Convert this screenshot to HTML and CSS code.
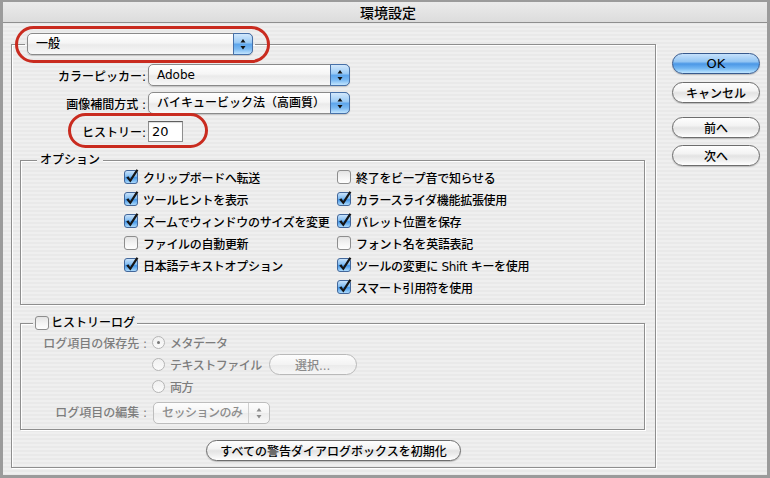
FILE: index.html
```html
<!DOCTYPE html>
<html lang="ja">
<head>
<meta charset="utf-8">
<title>環境設定</title>
<link rel="stylesheet" href="styles.css">
</head>
<body>
<svg class="defs" width="0" height="0" aria-hidden="true">
  <defs>
    <linearGradient id="gBlue" x1="0" y1="0" x2="0" y2="1">
      <stop offset="0" stop-color="#cfe6fc"/>
      <stop offset="0.45" stop-color="#82bdf2"/>
      <stop offset="0.55" stop-color="#4396e8"/>
      <stop offset="1" stop-color="#b5e0fe"/>
    </linearGradient>
    <linearGradient id="gWhite" x1="0" y1="0" x2="0" y2="1">
      <stop offset="0" stop-color="#e2e2e2"/>
      <stop offset="0.5" stop-color="#f3f3f3"/>
      <stop offset="1" stop-color="#ffffff"/>
    </linearGradient>
    <linearGradient id="gRadio" x1="0" y1="0" x2="0" y2="1">
      <stop offset="0" stop-color="#f0f0f0"/>
      <stop offset="1" stop-color="#fbfbfb"/>
    </linearGradient>
    <symbol id="cb-on" viewBox="0 0 14 14" overflow="visible">
      <rect x="0.5" y="0.5" width="13" height="13" rx="2.5" fill="url(#gBlue)" stroke="#43679a"/>
      <path d="M2.2 7.4 L4.4 6.3 L6.1 9.1 L12.4 -0.8 L14.4 0.3 L6.4 12.6 Z" fill="#151515"/>
    </symbol>
    <symbol id="cb-off" viewBox="0 0 14 14">
      <rect x="0.5" y="0.5" width="13" height="13" rx="2.5" fill="url(#gWhite)" stroke="#8d8d8d"/>
    </symbol>
    <symbol id="rd-on" viewBox="0 0 13 13">
      <circle cx="6.5" cy="6.5" r="6" fill="url(#gRadio)" stroke="#b4b4b4"/>
      <circle cx="6.5" cy="6.5" r="1.5" fill="#777"/>
    </symbol>
    <symbol id="rd-off" viewBox="0 0 13 13">
      <circle cx="6.5" cy="6.5" r="6" fill="url(#gRadio)" stroke="#b4b4b4"/>
    </symbol>
    <symbol id="arrows" viewBox="0 0 18 20">
      <path d="M6.5 8.5 H11.5 L9 5 Z M6.5 12 H11.5 L9 15.5 Z"/>
    </symbol>
  </defs>
</svg>

<div class="window">
  <div class="titlebar">環境設定</div>
  <div class="content stripe">
    <fieldset class="panel">
      <legend class="panel-legend">
        <span class="popup popup-main">
          <span class="popup-text">一般</span>
          <span class="stepper"><svg class="arrows" width="18" height="20"><use href="#arrows"/></svg></span>
          <span class="ring ring-popup"></span>
        </span>
      </legend>

      <div class="row row-first">
        <span class="row-label">カラーピッカー:</span>
        <span class="popup popup-wide">
          <span class="popup-text">Adobe</span>
          <span class="stepper"><svg class="arrows" width="18" height="20"><use href="#arrows"/></svg></span>
        </span>
      </div>
      <div class="row">
        <span class="row-label">画像補間方式 :</span>
        <span class="popup popup-wide">
          <span class="popup-text">バイキュービック法（高画質）</span>
          <span class="stepper"><svg class="arrows" width="18" height="20"><use href="#arrows"/></svg></span>
        </span>
      </div>
      <div class="row row-history">
        <span class="row-label">ヒストリー:</span>
        <span class="field">20<span class="ring ring-field"></span></span>
      </div>

      <fieldset class="group group-options">
        <legend class="group-legend stripe">オプション</legend>
        <div class="opt-cols">
          <div class="opt-col">
            <span class="check"><svg class="cb"><use href="#cb-on"/></svg>クリップボードへ転送</span>
            <span class="check"><svg class="cb"><use href="#cb-on"/></svg>ツールヒントを表示</span>
            <span class="check"><svg class="cb"><use href="#cb-on"/></svg>ズームでウィンドウのサイズを変更</span>
            <span class="check"><svg class="cb"><use href="#cb-off"/></svg>ファイルの自動更新</span>
            <span class="check"><svg class="cb"><use href="#cb-on"/></svg>日本語テキストオプション</span>
          </div>
          <div class="opt-col">
            <span class="check"><svg class="cb"><use href="#cb-off"/></svg>終了をビープ音で知らせる</span>
            <span class="check"><svg class="cb"><use href="#cb-on"/></svg>カラースライダ機能拡張使用</span>
            <span class="check"><svg class="cb"><use href="#cb-on"/></svg>パレット位置を保存</span>
            <span class="check"><svg class="cb"><use href="#cb-off"/></svg>フォント名を英語表記</span>
            <span class="check"><svg class="cb"><use href="#cb-on"/></svg>ツールの変更に Shift キーを使用</span>
            <span class="check"><svg class="cb"><use href="#cb-on"/></svg>スマート引用符を使用</span>
          </div>
        </div>
      </fieldset>

      <fieldset class="group group-log">
        <legend class="group-legend log-legend stripe"><svg class="cb"><use href="#cb-off"/></svg>ヒストリーログ</legend>
        <div class="log-grid">
          <span class="log-label">ログ項目の保存先 :</span>
          <span class="radio-item"><svg class="rd"><use href="#rd-on"/></svg>メタデータ</span>
          <span></span>
          <span class="radio-item"><svg class="rd"><use href="#rd-off"/></svg>テキストファイル<span class="btn btn-disabled btn-select">選択...</span></span>
          <span></span>
          <span class="radio-item"><svg class="rd"><use href="#rd-off"/></svg>両方</span>
          <span class="log-label log-edit">ログ項目の編集 :</span>
          <span class="popup popup-disabled">
            <span class="popup-text">セッションのみ</span>
            <span class="stepper-disabled"><svg class="arrows" width="18" height="20"><use href="#arrows"/></svg></span>
          </span>
        </div>
      </fieldset>

      <div class="reset-row"><span class="btn btn-reset">すべての警告ダイアログボックスを初期化</span></div>
    </fieldset>

    <div class="side">
      <span class="btn btn-default">OK</span>
      <span class="btn btn-cancel">キャンセル</span>
      <span class="btn btn-prev">前へ</span>
      <span class="btn btn-next">次へ</span>
    </div>
  </div>
</div>
</body>
</html>
```

FILE: styles.css
```css
* { box-sizing: border-box; }
html, body { margin: 0; padding: 0; }
body {
  width: 770px;
  height: 478px;
  overflow: hidden;
  font-family: "DejaVu Sans", "Noto Sans CJK JP", sans-serif;
  font-size: 12px;
  font-weight: 500;
  color: #000;
  background: #ececec;
}
.defs { position: absolute; width: 0; height: 0; overflow: hidden; }
svg { overflow: visible; }

.window {
  width: 770px;
  height: 478px;
  border: 3px solid #9b9b9b;
  border-top-width: 2px;
  display: flex;
  flex-direction: column;
  background: #ececec;
}
.titlebar {
  flex: none;
  height: 21px;
  border-bottom: 1px solid #8f8f8f;
  background: linear-gradient(#ebebeb, #dcdcdc);
  text-align: center;
  font-family: "Noto Sans CJK JP", sans-serif;
  font-size: 14px;
  line-height: 20px;
  padding-left: 6px;
}
.stripe {
  background: repeating-linear-gradient(#efefef 0 2px, #e9e9e9 2px 4px);
  background-attachment: fixed;
}
.content {
  flex: 1;
  display: flex;
  gap: 16px;
  padding: 10px 0 0 8px;
}

fieldset {
  margin: 0;
  padding: 0;
  min-width: 0;
  border: 1px solid #8e8e8e;
  box-shadow: 1px 1px 0 #fff, inset 1px 1px 0 #fff;
}
.panel { width: 645px; flex: none; align-self: flex-start; }
.panel-legend { display: flex; margin-left: 13px; padding: 0 2px; }

.row { display: flex; align-items: center; height: 22px; margin-top: 6px; }
.row-first { margin-top: 9px; }
.row-history { height: 21px; margin-top: 7px; }
.row-label { width: 134px; margin-right: 2px; text-align: right; white-space: nowrap; }

.popup {
  position: relative;
  display: inline-flex;
  align-items: stretch;
  height: 22px;
  border: 1px solid #8a8a8a;
  border-radius: 5px;
  background: linear-gradient(#ffffff 0%, #f5f5f5 45%, #eaeaea 55%, #f8f8f8 100%);
  box-shadow: 0 1px 1px rgba(0, 0, 0, .16);
}
.popup-main { width: 226px; }
.popup-wide { width: 202px; }
.popup-text { flex: 1; padding-left: 8px; line-height: 20px; white-space: nowrap; overflow: hidden; }
.stepper {
  flex: none;
  width: 20px;
  margin: -1px -1px -1px 0;
  border: 1px solid #4670a8;
  border-radius: 0 5px 5px 0;
  background: linear-gradient(#d2e8fc 0%, #9ccbf5 42%, #5ea6ec 52%, #7ab9f2 75%, #c3e5fe 100%);
  display: flex;
  align-items: center;
  justify-content: center;
}
.arrows { width: 18px; height: 20px; fill: #111; }

.field {
  position: relative;
  width: 35px;
  height: 21px;
  border: 1px solid #8e8e8e;
  border-top-color: #5f5f5f;
  background: #fff;
  box-shadow: inset 0 1px 1px rgba(0, 0, 0, .15);
  padding-left: 3px;
  font-size: 13px;
  line-height: 19px;
}

.ring {
  position: absolute;
  border: 3px solid #c92b1f;
  border-radius: 20px;
  pointer-events: none;
}
.ring-popup { left: -13px; right: -18px; top: -8px; bottom: -9px; }
.ring-field { left: -81px; right: -26px; top: -9px; bottom: -7px; }

.group { width: 625px; margin-left: 8px; margin-top: 10px; }
.group-legend { margin-left: 16px; padding: 0 3px; height: 16px; line-height: 16px; }
.opt-cols { display: flex; margin-top: -2px; padding: 0 0 6px 103px; }
.opt-col { width: 213px; display: flex; flex-direction: column; }
.check { display: flex; align-items: center; gap: 5px; height: 22px; white-space: nowrap; letter-spacing: -0.3px; }
.cb { width: 14px; height: 14px; flex: none; }

.log-legend { display: flex; align-items: center; gap: 2px; margin-left: 12px; padding: 0 2px; }
.log-grid {
  display: grid;
  grid-template-columns: 126px auto;
  grid-template-rows: 22px 22px 22px 27px;
  column-gap: 5px;
  align-items: center;
  padding-bottom: 5px;
}
.log-label { text-align: right; color: #7d7d7d; white-space: nowrap; }
.log-edit { align-self: end; line-height: 22px; }
.radio-item { display: flex; align-items: center; gap: 5px; color: #7d7d7d; white-space: nowrap; letter-spacing: -0.5px; }
.rd { width: 13px; height: 13px; flex: none; }

.popup-disabled {
  align-self: end;
  width: 117px;
  margin-left: 1px;
  border-color: #bdbdbd;
  box-shadow: none;
  color: #8c8c8c;
  letter-spacing: -0.5px;
  background: linear-gradient(#fdfdfd, #f4f4f4 50%, #ececec 52%, #f8f8f8);
}
.stepper-disabled {
  flex: none;
  width: 21px;
  border-left: 1px solid #d0d0d0;
  display: flex;
  align-items: center;
  justify-content: center;
}
.popup-disabled .arrows { fill: #8c8c8c; }

.btn {
  display: flex;
  align-items: center;
  justify-content: center;
  height: 21px;
  border: 1px solid #6d6d6d;
  border-radius: 11px;
  background: linear-gradient(#fefefe 0%, #f3f3f3 40%, #e3e3e3 52%, #efefef 75%, #ffffff 100%);
  box-shadow: 0 1px 1px rgba(0, 0, 0, .2);
  white-space: nowrap;
  letter-spacing: 0;
}
.btn-default {
  font-size: 13px;
  border-color: #37598d;
  background: linear-gradient(#c6e1fb 0%, #93c5f3 40%, #4b97e6 52%, #70b5f2 75%, #c0e6ff 100%);
}
.btn-disabled {
  border-color: #b9b9b9;
  color: #8a8a8a;
  box-shadow: none;
  background: linear-gradient(#fdfdfd, #f3f3f3 50%, #eaeaea 52%, #f7f7f7);
}
.btn-select { width: 88px; margin-left: 2px; }
.reset-row { display: flex; justify-content: center; margin-top: 10px; padding-bottom: 6px; }
.btn-reset { width: 255px; }

.side { width: 88px; flex: none; display: flex; flex-direction: column; padding-top: 20px; }
.btn-cancel { margin-top: 8px; }
.btn-prev { margin-top: 14px; }
.btn-next { margin-top: 7px; }
```
